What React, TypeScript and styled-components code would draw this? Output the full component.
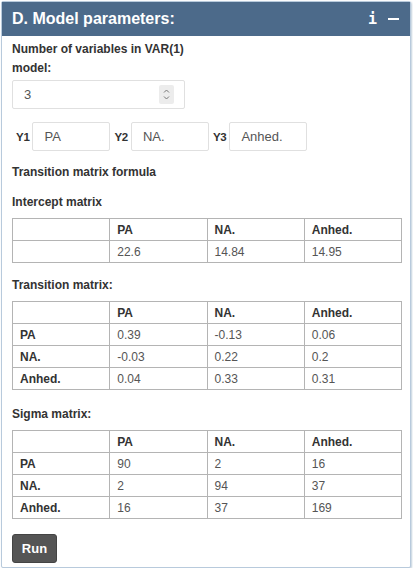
import React from "react";
import styled, { createGlobalStyle } from "styled-components";

const GlobalStyle = createGlobalStyle`
  html, body { margin: 0; padding: 0; background: #ffffff; }
  body { font-family: "Liberation Sans", Arial, Helvetica, sans-serif; color: #333; }
  * { box-sizing: border-box; }
`;

const Panel = styled.section`
  margin: 1px 2px 0 1px;
  width: 410px;
  border: 1px solid #b8cadc;
  border-radius: 2px;
  box-shadow: 1px 1px 2px rgba(120, 150, 180, 0.45);
  background: #fff;
`;

const Header = styled.header`
  display: flex;
  align-items: center;
  justify-content: space-between;
  height: 34px;
  padding: 0 11px 0 10px;
  background: #4c6a8a;
  color: #fff;
`;

const Title = styled.h3`
  margin: 0;
  font-size: 16px;
  font-weight: bold;
  letter-spacing: 0;
`;

const Tools = styled.div`
  display: flex;
  align-items: center;
  gap: 11px;
`;

const InfoIcon = styled.span`
  font-family: "DejaVu Sans Mono", monospace;
  font-weight: bold;
  font-size: 15px;
  line-height: 1;
`;

const Dash = styled.span`
  display: block;
  width: 11px;
  height: 2px;
  background: #fff;
`;

const Body = styled.div`
  display: flex;
  flex-direction: column;
  align-items: flex-start;
  padding: 4px 10px 4px 10px;
`;

const FieldLabel = styled.label`
  width: 180px;
  font-size: 12px;
  font-weight: bold;
  line-height: 19px;
  color: #333;
`;

const NumberBox = styled.div`
  display: flex;
  align-items: center;
  width: 173px;
  height: 29px;
  margin-top: 2px;
  padding: 0 10px 0 11px;
  border: 1px solid #e0e0e0;
  border-radius: 2px;
`;

const ValueInput = styled.input`
  flex: 1;
  min-width: 0;
  border: none;
  outline: none;
  padding: 0;
  font-family: inherit;
  font-size: 13px;
  color: #555;
  background: transparent;
`;

const Spinner = styled.span`
  display: flex;
  width: 15px;
  height: 19px;
  background: #ececec;
  border-radius: 2px;
`;

const NameRow = styled.div`
  display: flex;
  align-items: center;
  margin-top: 13px;
`;

const NameLabel = styled.label`
  margin: 0 3px 0 4px;
  font-size: 11.5px;
  font-weight: bold;
  letter-spacing: -0.3px;
  color: #333;
`;

const NameInput = styled.input`
  width: 78px;
  height: 29px;
  padding: 0 11px;
  border: 1px solid #e0e0e0;
  border-radius: 2px;
  font-family: inherit;
  font-size: 13px;
  color: #555;
  outline: none;
`;

const SectionTitle = styled.h4<{ $gap: number }>`
  margin: ${(p) => p.$gap}px 0 0 0;
  font-size: 12px;
  font-weight: bold;
  line-height: 18px;
  color: #333;
`;

const MatrixTable = styled.table`
  width: 390px;
  margin-top: 7px;
  border-collapse: collapse;
  table-layout: fixed;
  font-size: 12px;
`;

const Cell = styled.td<{ $head?: boolean }>`
  height: 22px;
  padding: 0 7px;
  border: 1px solid #b4b4b4;
  font-weight: ${(p) => (p.$head ? "bold" : "normal")};
  color: ${(p) => (p.$head ? "#333" : "#555")};
  text-align: left;
  vertical-align: middle;
`;

const RunButton = styled.button`
  margin-top: 15px;
  width: 45px;
  height: 29px;
  padding: 0;
  border: 1px solid #444;
  border-radius: 3px;
  background: #555;
  color: #fff;
  font-family: inherit;
  font-size: 13px;
  font-weight: bold;
`;

const names = ["PA", "NA.", "Anhed."];

type Matrix = { rows: (string | null)[]; values: string[][] };

function Table({ data }: { data: Matrix }) {
  return (
    <MatrixTable>
      <colgroup>
        <col />
        <col />
        <col />
        <col />
      </colgroup>
      <tbody>
        <tr>
          <Cell $head />
          {names.map((n) => (
            <Cell key={n} $head>
              {n}
            </Cell>
          ))}
        </tr>
        {data.values.map((row, i) => (
          <tr key={i}>
            <Cell $head>{data.rows[i] ?? ""}</Cell>
            {row.map((v, j) => (
              <Cell key={j}>{v}</Cell>
            ))}
          </tr>
        ))}
      </tbody>
    </MatrixTable>
  );
}

const intercept: Matrix = { rows: [null], values: [["22.6", "14.84", "14.95"]] };
const transition: Matrix = {
  rows: names,
  values: [
    ["0.39", "-0.13", "0.06"],
    ["-0.03", "0.22", "0.2"],
    ["0.04", "0.33", "0.31"],
  ],
};
const sigma: Matrix = {
  rows: names,
  values: [
    ["90", "2", "16"],
    ["2", "94", "37"],
    ["16", "37", "169"],
  ],
};

export default function App() {
  return (
    <>
      <GlobalStyle />
      <Panel>
        <Header>
          <Title>D. Model parameters:</Title>
          <Tools>
            <InfoIcon>i</InfoIcon>
            <Dash />
          </Tools>
        </Header>
        <Body>
          <FieldLabel>Number of variables in VAR(1) model:</FieldLabel>
          <NumberBox>
            <ValueInput defaultValue="3" />
            <Spinner>
              <svg width="15" height="19" viewBox="0 0 15 19">
                <path d="M5 7.5 L7.5 5 L10 7.5" fill="none" stroke="#777" strokeWidth="1" />
                <path d="M5 11.5 L7.5 14 L10 11.5" fill="none" stroke="#777" strokeWidth="1" />
              </svg>
            </Spinner>
          </NumberBox>
          <NameRow>
            {names.map((n, i) => (
              <React.Fragment key={n}>
                <NameLabel>Y{i + 1}</NameLabel>
                <NameInput defaultValue={n} />
              </React.Fragment>
            ))}
          </NameRow>
          <SectionTitle $gap={12}>Transition matrix formula</SectionTitle>
          <SectionTitle $gap={12}>Intercept matrix</SectionTitle>
          <Table data={intercept} />
          <SectionTitle $gap={13}>Transition matrix:</SectionTitle>
          <Table data={transition} />
          <SectionTitle $gap={15}>Sigma matrix:</SectionTitle>
          <Table data={sigma} />
          <RunButton>Run</RunButton>
        </Body>
      </Panel>
    </>
  );
}
